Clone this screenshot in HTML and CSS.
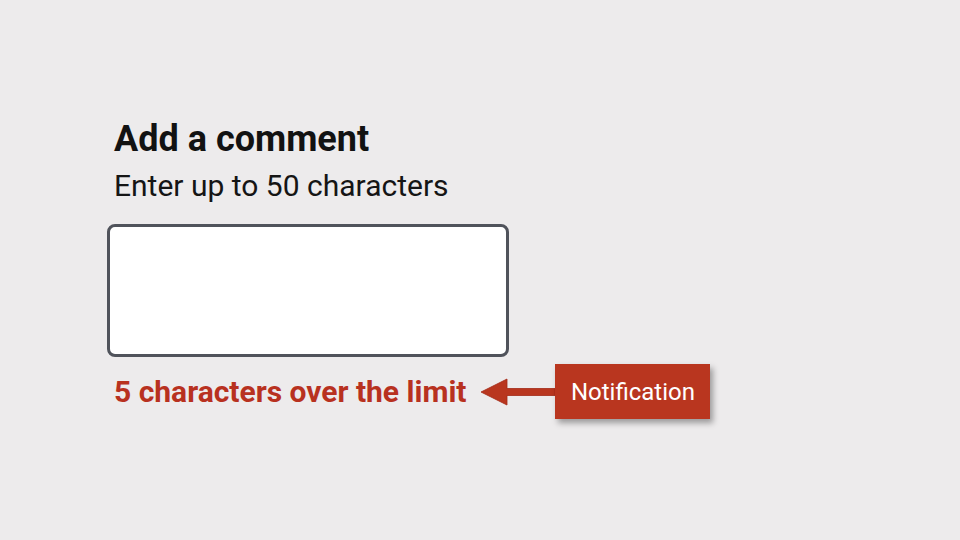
FILE: index.html
```html
<!DOCTYPE html>
<html lang="en">
<head>
<meta charset="utf-8">
<title>Add a comment</title>
<link rel="stylesheet" href="styles.css">
</head>
<body>
<main class="page">
  <section class="field">
    <h1 class="title">Add a comment</h1>
    <p class="hint">Enter up to 50 characters</p>
    <div class="textbox" role="textbox" aria-multiline="true"></div>
    <div class="status-row">
      <p class="error">5 characters over the limit</p>
      <svg class="arrow" width="75" height="28" viewBox="0 0 75 28" aria-hidden="true">
        <polygon points="1,14 27,1 27,10.5 75,10.5 75,17.5 27,17.5 27,27" fill="#b9361f" stroke="#a32a17" stroke-width="0.8" stroke-linejoin="miter"/>
      </svg>
      <div class="note">Notification</div>
    </div>
  </section>
</main>
</body>
</html>
```

FILE: styles.css
```css
html, body {
  margin: 0;
  padding: 0;
}

body {
  background: #edebec;
  font-family: Roboto, "Noto Sans", "Liberation Sans", sans-serif;
  color: #141414;
  width: 960px;
  height: 540px;
  overflow: hidden;
}

.page {
  padding: 119px 0 0 107px;
}

.field {
  display: flex;
  flex-direction: column;
  align-items: flex-start;
}

.title {
  margin: 0 0 10px 0;
  padding-left: 7px;
  font-size: 36px;
  line-height: 40px;
  font-weight: 700;
  color: #121212;
}

.hint {
  margin: 0 0 21px 0;
  padding-left: 7px;
  font-size: 30px;
  line-height: 34px;
  font-weight: 400;
  color: #151515;
}

.textbox {
  box-sizing: border-box;
  width: 402px;
  height: 133px;
  background: #ffffff;
  border: 3px solid #50535b;
  border-radius: 8px;
}

.status-row {
  display: flex;
  align-items: center;
  margin-top: 7px;
  height: 55px;
}

.error {
  margin: 0;
  padding-left: 7px;
  font-size: 30px;
  line-height: 34px;
  font-weight: 700;
  color: #b8311f;
}

.arrow {
  display: block;
  margin-left: 14px;
}

.note {
  box-sizing: border-box;
  width: 155px;
  height: 55px;
  display: flex;
  align-items: center;
  justify-content: center;
  background: #b9361f;
  color: #ffffff;
  font-size: 24px;
  font-weight: 400;
  box-shadow: 3px 4px 6px rgba(0, 0, 0, 0.35);
}
```
